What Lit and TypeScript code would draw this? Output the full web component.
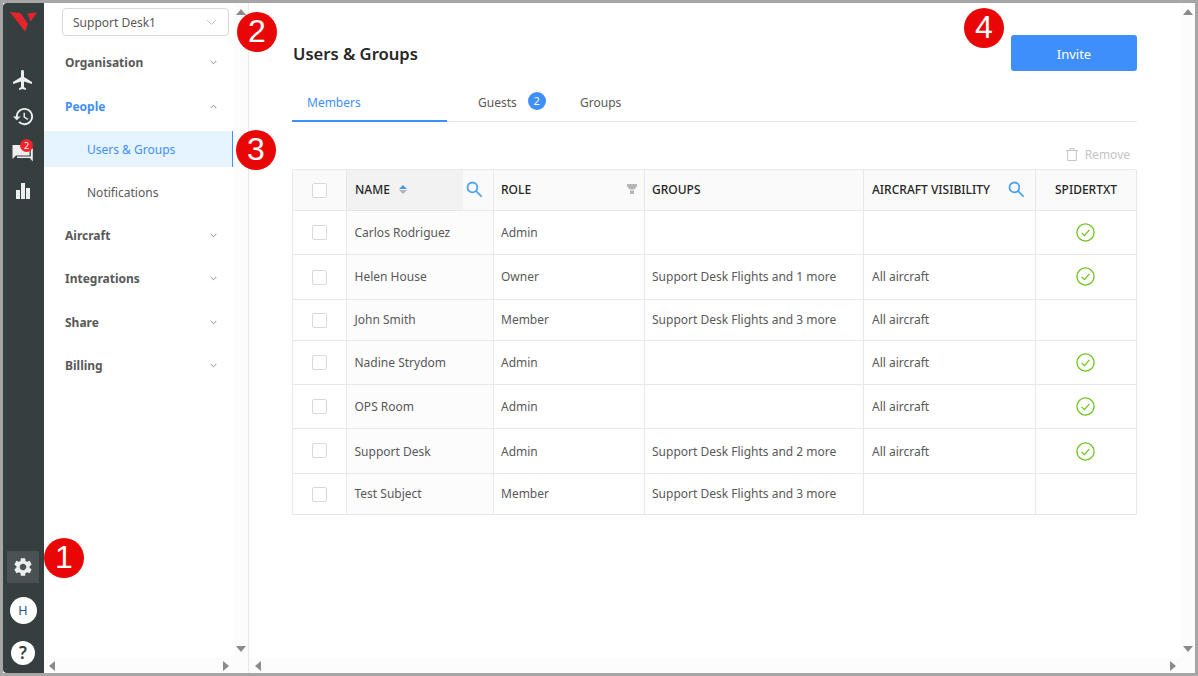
import { LitElement, html, css, svg } from "lit";
import { customElement } from "lit/decorators.js";

const PLANE = "M21 16v-2l-8-5V3.5c0-.83-.67-1.5-1.5-1.5S10 2.67 10 3.5V9l-8 5v2l8-2.5V19l-2 1.5V22l3.5-1 3.5 1v-1.5L13 19v-5.5l8 2.5z";
const HISTORY = "M13 3c-4.97 0-9 4.03-9 9H1l3.89 3.89.07.14L9 12H6c0-3.87 3.13-7 7-7s7 3.13 7 7-3.13 7-7 7c-1.93 0-3.68-.79-4.94-2.06l-1.42 1.42C8.27 19.99 10.51 21 13 21c4.97 0 9-4.03 9-9s-4.03-9-9-9zm-1 5v5l4.28 2.54.72-1.21-3.5-2.08V8H12z";
const GEAR = "M19.14 12.94c.04-.3.06-.61.06-.94 0-.32-.02-.64-.07-.94l2.03-1.58c.18-.14.23-.41.12-.61l-1.92-3.32c-.12-.22-.37-.29-.59-.22l-2.39.96c-.5-.38-1.03-.7-1.62-.94l-.36-2.54c-.04-.24-.24-.41-.48-.41h-3.84c-.24 0-.43.17-.47.41l-.36 2.54c-.59.24-1.13.57-1.62.94l-2.39-.96c-.22-.08-.47 0-.59.22L2.74 8.87c-.12.21-.08.47.12.61l2.03 1.58c-.05.3-.09.63-.09.94s.02.64.07.94l-2.03 1.58c-.18.14-.23.41-.12.61l1.92 3.32c.12.22.37.29.59.22l2.39-.96c.5.38 1.03.7 1.62.94l.36 2.54c.05.24.24.41.48.41h3.84c.24 0 .44-.17.47-.41l.36-2.54c.59-.24 1.13-.56 1.62-.94l2.39.96c.22.08.47 0 .59-.22l1.92-3.32c.12-.22.07-.47-.12-.61l-2.01-1.58zM12 15.6c-1.98 0-3.6-1.62-3.6-3.6s1.62-3.6 3.6-3.6 3.6 1.62 3.6 3.6-1.62 3.6-3.6 3.6z";

const icon = (d: string, size = 24) => html`<svg width=${size} height=${size} viewBox="0 0 24 24" fill="currentColor">${svg`<path d=${d}></path>`}</svg>`;

const chevron = (up = false) => html`<svg class="chev" width="7" height="5" viewBox="0 0 7 5" fill="none" stroke="currentColor" stroke-width="1">${svg`<path d=${up ? "M.7 4 3.5 1.2 6.3 4" : "M.7 1 3.5 3.8 6.3 1"}></path>`}</svg>`;

const search = () => html`<svg width="16" height="16" viewBox="0 0 17 17" fill="none" stroke="#4ea3f1" stroke-width="1.9">${svg`<circle cx="6.8" cy="6.8" r="5.2"></circle><path d="M10.6 10.6 16 16" stroke-linecap="round"></path>`}</svg>`;

const okMark = () => html`<svg width="19" height="19" viewBox="0 0 19 19" fill="none" stroke="#6cc31d">${svg`<circle cx="9.5" cy="9.5" r="8.6" stroke-width="1.3"></circle><path d="M5.6 9.8 8.4 12.6 13.4 6.8" stroke-width="1.2"></path>`}</svg>`;

const NAV = [
  { label: "Organisation", h: 44 },
  { label: "People", h: 44, open: true },
  { label: "Aircraft", h: 43 },
  { label: "Integrations", h: 43 },
  { label: "Share", h: 44 },
  { label: "Billing", h: 43 },
];

// lift: rows whose text sits a pixel higher in the row
const ROWS = [
  { name: "Carlos Rodriguez", role: "Admin", groups: "", vis: "", txt: true, h: 44 },
  { name: "Helen House", role: "Owner", groups: "Support Desk Flights and 1 more", vis: "All aircraft", txt: true, h: 45, lift: true },
  { name: "John Smith", role: "Member", groups: "Support Desk Flights and 3 more", vis: "All aircraft", txt: false, h: 41, lift: true },
  { name: "Nadine Strydom", role: "Admin", groups: "", vis: "All aircraft", txt: true, h: 44 },
  { name: "OPS Room", role: "Admin", groups: "", vis: "All aircraft", txt: true, h: 44 },
  { name: "Support Desk", role: "Admin", groups: "Support Desk Flights and 2 more", vis: "All aircraft", txt: true, h: 45 },
  { name: "Test Subject", role: "Member", groups: "Support Desk Flights and 3 more", vis: "", txt: false, h: 41, lift: true },
];

@customElement("app-root")
export class AppRoot extends LitElement {
  static styles = css`
    :host {
      display: block;
      width: 1198px;
      height: 676px;
      font-family: "Noto Sans", "Open Sans", sans-serif;
      font-size: 12px;
      color: #595959;
    }
    * { box-sizing: border-box; }
    .frame {
      position: relative;
      display: flex;
      width: 1198px;
      height: 676px;
      border: 3px solid #a6a6a6;
      background: #fff;
      overflow: hidden;
    }
    .rail {
      width: 41px;
      flex: none;
      background: #353f40;
      color: #eeeeee;
      display: flex;
      flex-direction: column;
      align-items: center;
      padding-right: 1px;
      border-radius: 4px 0 0 4px;
    }
    .logo { margin-top: 9px; height: 22px; }
    .rail-icons { margin-top: 34px; display: flex; flex-direction: column; align-items: center; gap: 13px; }
    .rail-icons .ic { position: relative; height: 24px; display: block; }
    .rail-icons .ic.bars { margin-top: 1px; }
    .rail-icons .ic.history { height: 23px; }
    .rail-icons svg { display: block; }
    .dot {
      position: absolute;
      top: -2px;
      right: 2px;
      width: 13px;
      height: 13px;
      border-radius: 50%;
      background: #f5222d;
      color: #fff;
      font-size: 9px;
      line-height: 13px;
      text-align: center;
    }
    .rail-bottom { margin-top: auto; display: flex; flex-direction: column; align-items: center; }
    .gear {
      width: 32px;
      height: 32px;
      background: #4a5354;
      display: flex;
      align-items: center;
      justify-content: center;
    }
    .avatar {
      width: 27px;
      height: 27px;
      margin-top: 14px;
      border-radius: 50%;
      background: #fff;
      color: #1f4f8f;
      font-size: 12.5px;
      line-height: 27px;
      text-align: center;
    }
    .help {
      width: 24px;
      height: 24px;
      margin: 17px 0 8px;
      border-radius: 50%;
      background: #fff;
      color: #353f40;
      font-size: 17px;
      font-weight: 600;
      line-height: 24px;
      text-align: center;
    }
    .side {
      width: 205px;
      flex: none;
      display: flex;
      flex-direction: column;
      border-right: 1px solid #e8e8e8;
    }
    .side-top { flex: 1; display: flex; min-height: 0; }
    .nav { width: 190px; flex: none; }
    .select {
      margin: 5px 0 0 18px;
      width: 167px;
      height: 28px;
      border: 1px solid #d9d9d9;
      border-radius: 4px;
      padding: 1px 10px 0;
      display: flex;
      align-items: center;
      justify-content: space-between;
      font-size: 12px;
      color: #595959;
    }
    .select svg { color: #c8c8c8; margin-right: 1px; }
    .groups { margin-top: 4px; }
    .nav-head {
      display: flex;
      align-items: center;
      justify-content: space-between;
      padding: 0 17px 0 21px;
      font-weight: 700;
      font-size: 12px;
      color: #595959;
    }
    .nav-head.open { color: #3f8ffb; }
    .nav-head .chev { color: #8c8c8c; }
    .sub {
      display: flex;
      align-items: center;
      height: 43px;
      padding-left: 43px;
      font-size: 12px;
    }
    .sub.active {
      height: 36px;
      margin-top: 3px;
      margin-bottom: 4px;
      width: 189px;
      background: #e6f4ff;
      color: #3f8ffb;
      border-right: 1.5px solid #3f8ffb;
    }
    .vbar {
      width: 14px;
      flex: none;
      background: #fcfcfc;
      display: flex;
      flex-direction: column;
      justify-content: space-between;
      align-items: center;
      padding: 6px 0;
    }
    .hbar {
      height: 15px;
      flex: none;
      background: #fcfcfc;
      display: flex;
      justify-content: space-between;
      align-items: center;
      padding: 0 19px 0 5px;
    }
    .main-bar { padding: 0 19px 0 6px; }
    .tri { width: 0; height: 0; border: 5px solid transparent; }
    .tri.up { border-top: 0; border-bottom: 6px solid #8a8a8a; }
    .tri.down { border-bottom: 0; border-top: 6px solid #8a8a8a; }
    .tri.left { border-left: 0; border-right: 6px solid #8a8a8a; }
    .tri.right { border-right: 0; border-left: 6px solid #8a8a8a; }
    .main { flex: 1; min-width: 0; display: flex; flex-direction: column; }
    .main-top { flex: 1; display: flex; min-height: 0; }
    .content { flex: 1; min-width: 0; padding: 32px 44px 0 43px; }
    .head { display: flex; justify-content: space-between; align-items: flex-start; height: 36px; }
    h1 {
      margin: 7px 0 0 1px;
      font-size: 16.6px;
      line-height: 24px;
      font-weight: 600;
      color: #262626;
    }
    .invite {
      width: 126px;
      height: 36px;
      border: 0;
      border-radius: 3px;
      padding: 1px 0 0;
      background: #3f8ffb;
      color: #fff;
      font: inherit;
      font-size: 13px;
    }
    .tabs {
      margin-top: 14px;
      height: 37px;
      display: flex;
      border-bottom: 1px solid #e8e8e8;
      font-size: 12px;
    }
    .tab { display: flex; align-items: center; height: 37px; padding-bottom: 2px; }
    .tab.active {
      width: 155px;
      padding-left: 15px;
      color: #3f8ffb;
      border-bottom: 2px solid #3f8ffb;
      padding-bottom: 0;
    }
    .tab.guests { margin-left: 31px; width: 102px; }
    .badge {
      margin-left: 11px;
      margin-bottom: 4px;
      width: 18px;
      height: 18px;
      border-radius: 50%;
      background: #3f8ffb;
      color: #fff;
      font-size: 11px;
      line-height: 18px;
      text-align: center;
    }
    .actions {
      height: 47px;
      display: flex;
      justify-content: flex-end;
      align-items: center;
      gap: 7px;
      padding: 17px 7px 0 0;
      color: #c4c4c4;
      font-size: 12px;
    }
    table {
      width: 845px;
      table-layout: fixed;
      border-collapse: separate;
      border-spacing: 0;
      border-top: 1px solid #e8e8e8;
      border-left: 1px solid #e8e8e8;
      border-radius: 3px 3px 0 0;
    }
    th, td {
      border-right: 1px solid #e8e8e8;
      border-bottom: 1px solid #e8e8e8;
      padding: 0 7px;
      text-align: left;
      font-size: 12px;
      font-weight: 400;
    }
    tr.lift td { padding-bottom: 2px; }
    th {
      height: 41px;
      padding-bottom: 2px;
      background: #fafafa;
      color: #262626;
      font-weight: 500;
      font-size: 12px;
    }
    td.namecell { background: #fcfcfc; padding-left: 7.5px; }
    td.viscell { padding-left: 8px; }
    .chk { text-align: center; padding-left: 0; padding-right: 0; }
    .box {
      display: inline-block;
      width: 15px;
      height: 15px;
      border: 1px solid #d9d9d9;
      border-radius: 2px;
      background: #fff;
      vertical-align: middle;
    }
    td .box { margin-bottom: 2px; }
    tr.lift td .box { margin-bottom: 0; }
    th.sorted { padding: 0; }
    .sortwrap { display: flex; height: 40px; align-items: stretch; }
    .sortlabel {
      flex: 1;
      display: flex;
      align-items: center;
      gap: 9px;
      padding: 0 0 2px 8px;
      background: #f2f2f2;
    }
    .searchbtn { width: 30px; flex: none; display: flex; align-items: center; padding: 0 0 2px 3px; }
    .carets { display: flex; flex-direction: column; gap: 1px; }
    .c-up { width: 0; height: 0; border: 4px solid transparent; border-top: 0; border-bottom: 4px solid #4e94ea; }
    .c-down { width: 0; height: 0; border: 4px solid transparent; border-bottom: 0; border-top: 4px solid #b5b5b5; }
    .between { display: flex; align-items: center; justify-content: space-between; }
    th.visible { padding: 0 11px 2px 8px; }
    .center { text-align: center; padding-left: 0; padding-right: 0; }
    td.center { padding-right: 2px; }
    .center svg { display: inline-block; vertical-align: middle; }
    .mark {
      position: absolute;
      width: 40px;
      height: 40px;
      border-radius: 50%;
      background: #e90606;
      color: #fff;
      font-family: "Liberation Sans", Arial, sans-serif;
      font-size: 32px;
      line-height: 39px;
      text-align: center;
    }
    .m1 { left: 41px; top: 535px; }
    .m2 { left: 234px; top: 9px; }
    .m3 { left: 233px; top: 127px; }
    .m4 { left: 961px; top: 5px; }
  `;

  render() {
    return html`
      <div class="frame">
        <aside class="rail">
          <div class="logo">
            <svg width="27" height="20" viewBox="0 0 27 20" fill="#e5242c">
              <path d="M0 0 10.500 1 18 12 15 19.500z"></path>
              <path d="M17.500 1.500 27 .5 20.500 9.500z"></path>
            </svg>
          </div>
          <div class="rail-icons">
            <span class="ic">${icon(PLANE)}</span>
            <span class="ic history">${icon(HISTORY, 23)}</span>
            <span class="ic">
              <svg width="24" height="24" viewBox="0 0 24 24" fill="currentColor">
                <path d="M1.500 4h17v10.500H5L1.500 18z"></path>
                <path d="M19.800 7.500h2v13l-3-3.500H6v-1.500h13.800z"></path>
              </svg>
              <span class="dot">2</span>
            </span>
            <span class="ic bars">
              <svg width="24" height="24" viewBox="0 0 24 24" fill="currentColor">
                <path d="M5 11h4v9H5zM10 4h4v16h-4zM15 9h4v11h-4z"></path>
              </svg>
            </span>
          </div>
          <div class="rail-bottom">
            <div class="gear">${icon(GEAR, 22)}</div>
            <div class="avatar">H</div>
            <div class="help">?</div>
          </div>
        </aside>

        <section class="side">
          <div class="side-top">
            <nav class="nav">
              <div class="select"><span>Support Desk1</span>
                <svg width="11" height="7" viewBox="0 0 11 7" fill="none" stroke="currentColor"><path d="M1 1l4.500 4.500L10 1"></path></svg>
              </div>
              <div class="groups">
                ${NAV.map((n) => html`
                  <div class="nav-head ${n.open ? "open" : ""}" style="height:${n.h}px">
                    <span>${n.label}</span>${chevron(n.open)}
                  </div>
                  ${n.open ? html`
                    <div class="sub active">Users &amp; Groups</div>
                    <div class="sub">Notifications</div>
                  ` : ""}
                `)}
              </div>
            </nav>
            <div class="vbar"><span class="tri up"></span><span class="tri down"></span></div>
          </div>
          <div class="hbar"><span class="tri left"></span><span class="tri right"></span></div>
        </section>

        <main class="main">
          <div class="main-top">
            <div class="content">
              <div class="head">
                <h1>Users &amp; Groups</h1>
                <button class="invite">Invite</button>
              </div>
              <div class="tabs">
                <div class="tab active">Members</div>
                <div class="tab guests">Guests<span class="badge">2</span></div>
                <div class="tab">Groups</div>
              </div>
              <div class="actions">
                <svg width="12" height="13" viewBox="0 0 12 13" fill="none" stroke="#c4c4c4"><path d="M0 2.500h12M4 2.500V.5h4v2M1.700 2.500v10h8.600v-10"></path></svg>
                <span>Remove</span>
              </div>
              <table>
                <colgroup>
                  <col style="width:54px" /><col style="width:147px" /><col style="width:151px" />
                  <col style="width:219px" /><col style="width:172px" /><col style="width:101px" />
                </colgroup>
                <thead>
                  <tr>
                    <th class="chk"><span class="box"></span></th>
                    <th class="sorted">
                      <div class="sortwrap">
                        <div class="sortlabel">NAME
                          <span class="carets"><span class="c-up"></span><span class="c-down"></span></span>
                        </div>
                        <div class="searchbtn">${search()}</div>
                      </div>
                    </th>
                    <th>
                      <div class="between">ROLE
                        <svg width="10" height="10" viewBox="0 0 10 10" fill="#b5b5b5"><path d="M0 0h10v2.500L7 5.500h-4L0 2.500zM3 6.500h4V10H3z"></path></svg>
                      </div>
                    </th>
                    <th>GROUPS</th>
                    <th class="visible"><div class="between">AIRCRAFT VISIBILITY ${search()}</div></th>
                    <th class="center">SPIDERTXT</th>
                  </tr>
                </thead>
                <tbody>
                  ${ROWS.map((r) => html`
                    <tr class=${r.lift ? "lift" : ""} style="height:${r.h}px">
                      <td class="chk"><span class="box"></span></td>
                      <td class="namecell">${r.name}</td>
                      <td>${r.role}</td>
                      <td>${r.groups}</td>
                      <td class="viscell">${r.vis}</td>
                      <td class="center">${r.txt ? okMark() : ""}</td>
                    </tr>
                  `)}
                </tbody>
              </table>
            </div>
            <div class="vbar"><span class="tri up"></span><span class="tri down"></span></div>
          </div>
          <div class="hbar main-bar"><span class="tri left"></span><span class="tri right"></span></div>
        </main>

        <div class="mark m1">1</div>
        <div class="mark m2">2</div>
        <div class="mark m3">3</div>
        <div class="mark m4">4</div>
      </div>
    `;
  }
}
